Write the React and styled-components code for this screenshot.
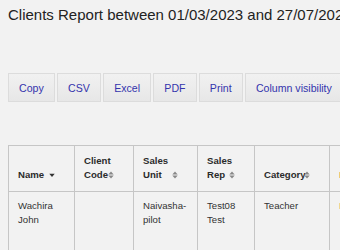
import React from "react";
import styled, { createGlobalStyle } from "styled-components";

const Global = createGlobalStyle`
  html, body { margin: 0; padding: 0; background: #f2f2f2; }
  body { font-family: "Liberation Sans", Arial, sans-serif; overflow: hidden; }
`;

const Page = styled.div`
  padding: 7px 0 0 8px;
  width: 600px;
`;

const Title = styled.h2`
  margin: 0;
  font-size: 15px;
  line-height: 15px;
  font-weight: normal;
  color: #222;
  white-space: nowrap;
`;

const Toolbar = styled.div`
  display: flex;
  gap: 2.3px;
  margin-top: 51px;
`;

const Button = styled.button`
  height: 29px;
  padding: 0 10px;
  border: 1px solid #dcdcdc;
  background: linear-gradient(to bottom, #f1f1f1 0%, #e7e7e7 100%);
  color: #3434ad;
  font-family: "Liberation Sans", Arial, sans-serif;
  font-size: 10.6px;
  white-space: nowrap;
  cursor: pointer;
`;

const Table = styled.table`
  margin-top: 43px;
  border-collapse: separate;
  border-spacing: 0;
  table-layout: fixed;
  width: 450px;
  border-top: 1px solid #c6c6c6;
  font-size: 9.6px;
  line-height: 14px;
  color: #333;
`;

const Th = styled.th`
  position: relative;
  box-sizing: border-box;
  text-align: left;
  vertical-align: bottom;
  font-weight: bold;
  color: ${(p) => p.$color || "#2b2b2b"};
  padding: 8px 18px 9px 9px;
  border-left: 1px solid #c6c6c6;
  border-bottom: 1px solid #c6c6c6;
`;

const Td = styled.td`
  box-sizing: border-box;
  vertical-align: top;
  padding: 7px 8px 40px 9px;
  color: ${(p) => p.$color || "#333"};
  border-left: 1px solid #c6c6c6;
  border-bottom: 1px solid #c6c6c6;
`;

const SortIcon = styled.svg`
  position: absolute;
  right: 19px;
  bottom: 12px;
  width: 6px;
  height: 8px;
`;

function Sort({ dir }) {
  return (
    <SortIcon viewBox="0 0 6 8">
      {dir === "desc" ? (
        <path d="M0.3 2.8 L5.7 2.8 L3 6 Z" fill="#333" />
      ) : (
        <>
          <path d="M0.3 3.6 L5.7 3.6 L3 0.4 Z" fill="#888" />
          <path d="M0.3 4.4 L5.7 4.4 L3 7.6 Z" fill="#888" />
        </>
      )}
    </SortIcon>
  );
}

const columns = [
  { label: "Name", width: 66, dir: "desc" },
  { label: "Client Code", width: 59 },
  { label: "Sales Unit", width: 64 },
  { label: "Sales Rep", width: 57 },
  { label: "Category", width: 75 },
  { label: "Phone", width: 129, color: "#e0954f", noSort: true },
];

const row = ["Wachira John", "", "Naivasha-pilot", "Test08 Test", "Teacher", "Primary"];

export default function App() {
  return (
    <>
      <Global />
      <Page>
        <Title>Clients Report between 01/03/2023 and 27/07/2023</Title>
        <Toolbar>
          {["Copy", "CSV", "Excel", "PDF", "Print", "Column visibility"].map((b) => (
            <Button key={b}>{b}</Button>
          ))}
        </Toolbar>
        <Table>
          <colgroup>
            {columns.map((c) => (
              <col key={c.label} style={{ width: c.width }} />
            ))}
          </colgroup>
          <thead>
            <tr>
              {columns.map((c) => (
                <Th key={c.label} $color={c.color}>
                  {c.label}
                  {!c.noSort && <Sort dir={c.dir} />}
                </Th>
              ))}
            </tr>
          </thead>
          <tbody>
            <tr>
              {row.map((v, i) => (
                <Td key={i} $color={i === 5 ? "#e0954f" : undefined}>
                  {v}
                </Td>
              ))}
            </tr>
          </tbody>
        </Table>
      </Page>
    </>
  );
}
